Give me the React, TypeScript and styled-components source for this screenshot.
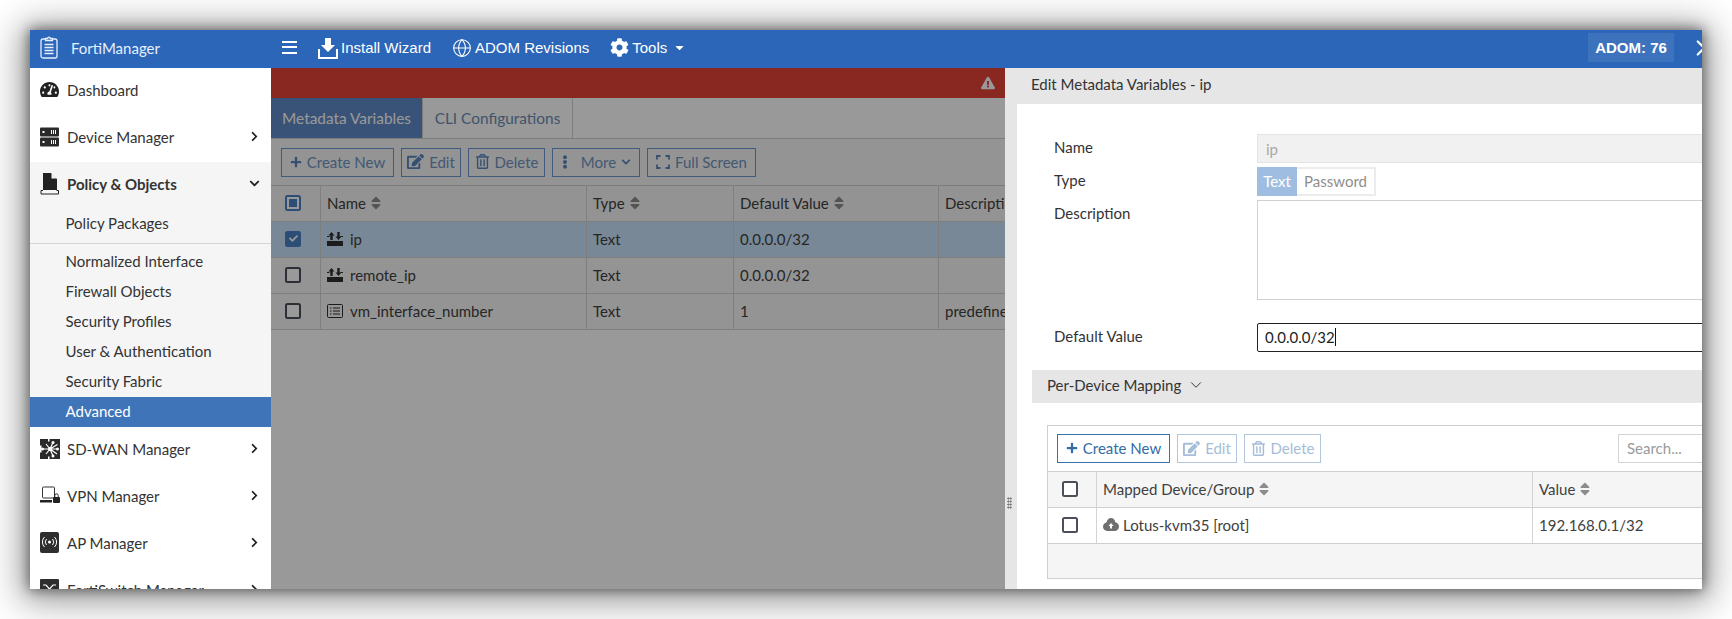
import React from "react";
import styled, { createGlobalStyle } from "styled-components";
import {
  FaCaretDown,
  FaChevronDown,
  FaChevronRight,
  FaCog,
  FaEdit,
  FaEllipsisV,
  FaExclamationTriangle,
  FaPlus,
  FaRegTrashAlt,
  FaSort,
  FaTachometerAlt,
  FaCheck,
} from "react-icons/fa";
import { Globe, ChevronDown, ChevronRight } from "lucide-react";

const Global = createGlobalStyle`
  html, body { margin: 0; padding: 0; background: #fff; }
  body { font-family: "Lato", "Liberation Sans", sans-serif; color: #333; }
`;

const Page = styled.div`
  padding: 30px;
  width: 1732px;
  height: 619px;
  box-sizing: border-box;
  overflow: hidden;
`;

const Win = styled.div`
  width: 1672px;
  height: 559px;
  display: flex;
  flex-direction: column;
  overflow: hidden;
  background: #fff;
  box-shadow: 0 0 12px 1px rgba(0, 0, 0, 0.5), 0 4px 34px 8px rgba(0, 0, 0, 0.4);
`;

/* ---------- top bar ---------- */
const TopBar = styled.header`
  flex: none;
  height: 38px;
  padding-bottom: 3px;
  box-sizing: border-box;
  background: #2c66b8;
  color: #fff;
  display: flex;
  align-items: center;
  font-family: "Liberation Sans", sans-serif;
`;
const Brand = styled.div`
  width: 241px;
  padding-left: 10px;
  box-sizing: border-box;
  display: flex;
  align-items: center;
  gap: 13px;
  font-family: "Lato", sans-serif;
  font-size: 15px;
  color: #e4f0ff;
`;
const Burger = styled.div`
  width: 15px;
  height: 13px;
  margin: 0 21px 0 11px;
  border-top: 2.5px solid #fff;
  border-bottom: 2.5px solid #fff;
  box-sizing: border-box;
  position: relative;
  &::after {
    content: "";
    position: absolute;
    left: 0;
    right: 0;
    top: 2.7px;
    height: 2.5px;
    background: #fff;
  }
`;
const NavItem = styled.div<{ $gap?: number }>`
  display: flex;
  align-items: center;
  gap: 3px;
  font-size: 15px;
  margin-right: ${(p) => p.$gap ?? 21}px;
`;
const Adom = styled.div`
  margin-left: auto;
  height: 29px;
  width: 86px;
  background: #3d72bd;
  display: flex;
  align-items: center;
  justify-content: center;
  font-weight: 700;
  font-size: 15px;
`;
const Next = styled.div`
  width: 28px;
  display: flex;
  justify-content: flex-end;
  svg {
    margin-right: -12px;
  }
`;

/* ---------- sidebar ---------- */
const Body = styled.div`
  flex: 1;
  min-height: 0;
  display: flex;
`;
const Sidebar = styled.nav`
  flex: none;
  width: 241px;
  background: #fff;
  overflow: hidden;
`;
const MenuRow = styled.div<{ $open?: boolean }>`
  height: 47px;
  display: flex;
  align-items: center;
  padding: 0 11px 4px 10px;
  box-sizing: border-box;
  font-size: 15px;
  color: #333;
  font-weight: ${(p) => (p.$open ? 700 : 400)};
  background: ${(p) => (p.$open ? "#f5f5f5" : "#fff")};
`;
const MenuIcon = styled.span`
  width: 27px;
  flex: none;
  display: flex;
  align-items: center;
`;
const MenuLabel = styled.span`
  flex: 1;
`;
const SubMenu = styled.div`
  background: #f5f5f5;
`;
const SubRow = styled.div<{ $active?: boolean }>`
  height: 30px;
  line-height: 28px;
  padding-left: 35.5px;
  font-size: 15px;
  color: ${(p) => (p.$active ? "#fff" : "#333")};
  background: ${(p) => (p.$active ? "#3f75b8" : "transparent")};
`;
const SubDivider = styled.div`
  height: 1px;
  background: #d4d4d4;
  margin: 4px 0 3px;
`;

/* ---------- dimmed main area ---------- */
const Backdrop = styled.main`
  flex: none;
  width: 734px;
  position: relative;
  overflow: hidden;
  background: #fff;
  display: flex;
  flex-direction: column;
`;
const Dim = styled.div`
  position: absolute;
  inset: 0;
  background: rgba(0, 0, 0, 0.4);
`;
const Alert = styled.div`
  flex: none;
  height: 30px;
  background: #e54238;
  color: #fff;
  display: flex;
  align-items: center;
  justify-content: flex-end;
  padding-right: 10px;
  box-sizing: border-box;
`;
const Tabs = styled.div`
  flex: none;
  height: 41px;
  display: flex;
  border-bottom: 1px solid #d0d0d0;
  box-sizing: border-box;
  background: #fff;
`;
const Tab = styled.div<{ $active?: boolean }>`
  width: ${(p) => (p.$active ? 152 : 150)}px;
  display: flex;
  align-items: center;
  justify-content: center;
  font-size: 15.4px;
  color: ${(p) => (p.$active ? "#fff" : "#6d8db5")};
  background: ${(p) => (p.$active ? "#5f89c8" : "#fff")};
  border-right: 1px solid #d0d0d0;
  box-sizing: border-box;
`;
const Toolbar = styled.div`
  flex: none;
  height: 47px;
  display: flex;
  align-items: center;
  gap: 7px;
  padding: 0 10px;
  box-sizing: border-box;
  background: #f7f7f7;
  border-bottom: 1px solid #d0d0d0;
`;
const Btn = styled.div<{ $w: number; $off?: boolean }>`
  width: ${(p) => p.$w}px;
  height: 29px;
  box-sizing: border-box;
  flex: none;
  display: flex;
  align-items: center;
  justify-content: center;
  gap: 5px;
  padding-bottom: 1px;
  font-size: 15px;
  color: ${(p) => (p.$off ? "#a6bdd8" : "#336ba6")};
  border: 1px solid ${(p) => (p.$off ? "#b3c6dc" : "#3a72aa")};
  background: #fff;
`;
const DimBtn = styled(Btn)`
  color: #6f93c0;
  background: #f7f7f7;
  border-color: #6b98d0;
  svg {
    color: #5a86bd;
  }
`;
const VarRow = styled.div<{ $head?: boolean; $selected?: boolean }>`
  display: grid;
  grid-template-columns: 50px 266px 147px 205px 1fr;
  height: 36px;
  box-sizing: border-box;
  border-bottom: 1px solid #d4d4d4;
  background: ${(p) => (p.$selected ? "#c9e3fb" : p.$head ? "#f5f5f5" : "#f7f7f7")};
  font-size: 15px;
  color: #404040;
`;
const Cell = styled.div<{ $center?: boolean }>`
  display: flex;
  align-items: center;
  justify-content: ${(p) => (p.$center ? "center" : "flex-start")};
  gap: 4px;
  padding-left: ${(p) => (p.$center ? 0 : 6)}px;
  padding-right: ${(p) => (p.$center ? 5 : 0)}px;
  padding-bottom: 2px;
  border-right: 1px solid #d4d4d4;
  white-space: nowrap;
  min-width: 0;
  &:last-child {
    border-right: 0;
  }
`;
const NameText = styled.span`
  margin-left: 3px;
`;
const Sort = styled(FaSort)`
  color: #8c8c8c;
  font-size: 16px;
  margin-left: -2px;
`;
const Box = styled.span<{ $on?: boolean }>`
  width: 16px;
  height: 16px;
  box-sizing: border-box;
  border: 2px solid ${(p) => (p.$on ? "#4a80c4" : "#4a4f59")};
  border-radius: 2.5px;
  background: ${(p) => (p.$on ? "#4a80c4" : "#fff")};
  color: #fff;
  display: inline-flex;
  align-items: center;
  justify-content: center;
  font-size: 9px;
`;
const Partial = styled(Box)`
  border-color: #4a80c4;
  background: #fff;
  &::after {
    content: "";
    width: 8px;
    height: 8px;
    background: #4a80c4;
  }
`;

/* ---------- slide-in panel ---------- */
const Panel = styled.aside`
  flex: none;
  width: 900px;
  background: #e6e6e6;
  display: flex;
  flex-direction: column;
  position: relative;
`;
const Handle = styled.div`
  position: absolute;
  left: 2px;
  top: 429px;
  width: 5px;
  height: 12px;
  background-image: radial-gradient(#666 0.8px, transparent 0.9px);
  background-size: 2.5px 3px;
`;
const PanelTitle = styled.div`
  height: 36px;
  flex: none;
  line-height: 33px;
  padding-left: 26px;
  font-size: 15px;
  color: #333;
`;
const PanelBody = styled.div`
  flex: 1;
  margin-left: 12px;
  background: #fff;
  padding-top: 30px;
`;
const FormRow = styled.div<{ $mb?: number }>`
  display: grid;
  grid-template-columns: 203px 1fr;
  padding-left: 37px;
  margin-bottom: ${(p) => p.$mb ?? 4}px;
`;
const Label = styled.div`
  line-height: 27px;
  font-size: 15px;
  color: #333;
`;
const TextField = styled.div<{ $disabled?: boolean; $focus?: boolean }>`
  height: 29px;
  box-sizing: border-box;
  display: flex;
  align-items: center;
  padding-left: ${(p) => (p.$focus ? 7 : 8)}px;
  padding-bottom: ${(p) => (p.$focus ? 1 : 0)}px;
  font-size: 15px;
  color: ${(p) => (p.$disabled ? "#a8a8a8" : "#222")};
  background: ${(p) => (p.$disabled ? "#f1f1f1" : "#fff")};
  border: ${(p) => (p.$focus ? "1px solid #222" : "1px solid #e4e4e4")};
  border-radius: ${(p) => (p.$focus ? "2px" : "0")};
`;
const Caret = styled.span`
  width: 1px;
  height: 18px;
  background: #111;
`;
const TextArea = styled.div`
  height: 100px;
  box-sizing: border-box;
  border: 1px solid #d0d0d0;
  background: #fff;
`;
const Toggle = styled.div`
  display: flex;
  height: 29px;
  width: 119px;
  box-sizing: border-box;
`;
const ToggleOpt = styled.div<{ $on?: boolean }>`
  display: flex;
  align-items: center;
  justify-content: center;
  padding-bottom: 2px;
  font-size: 15px;
  flex: ${(p) => (p.$on ? "0 0 40px" : "1")};
  background: ${(p) => (p.$on ? "#9fbde0" : "#fff")};
  color: ${(p) => (p.$on ? "#fff" : "#8e8e8e")};
  border: ${(p) => (p.$on ? "0" : "2px solid #ececec")};
  border-left: 0;
  box-sizing: border-box;
`;
const SectionBand = styled.div`
  margin: 18px 0 22px 15px;
  height: 33px;
  padding: 0 0 3px 15px;
  box-sizing: border-box;
  background: #e6e6e6;
  display: flex;
  align-items: center;
  gap: 6px;
  font-size: 15px;
  color: #333;
`;
const MapBox = styled.div`
  margin-left: 30px;
  width: 763px;
  box-sizing: border-box;
  border: 1px solid #cfcfcf;
  background: #fff;
`;
const MapToolbar = styled.div`
  height: 46px;
  display: flex;
  align-items: center;
  gap: 7px;
  padding-left: 9px;
  box-sizing: border-box;
  border-bottom: 1px solid #cfcfcf;
`;
const Search = styled.div`
  margin-left: auto;
  margin-right: 11px;
  width: 180px;
  height: 29px;
  box-sizing: border-box;
  border: 1px solid #d4d4d4;
  padding-left: 8px;
  line-height: 26px;
  font-size: 15px;
  color: #9a9a9a;
`;
const MapRow = styled.div<{ $head?: boolean }>`
  display: grid;
  grid-template-columns: 49px 436px 1fr;
  height: 36px;
  box-sizing: border-box;
  border-bottom: 1px solid #cfcfcf;
  background: ${(p) => (p.$head ? "#f5f5f5" : "#fff")};
  font-size: 15px;
  color: #404040;
`;
const MapFoot = styled.div`
  height: 34px;
  background: #f5f5f5;
`;

/* ---------- drawn icons ---------- */
const Clipboard = () => (
  <svg width="18" height="23" viewBox="0 0 18 23" fill="none" stroke="#e4f0ff" strokeWidth="1.3">
    <rect x="1" y="3" width="16" height="19" rx="2" />
    <path d="M5.500 4.500V2.500h2.200a1.300 1.300 0 0 1 2.600 0h2.200v2z" fill="#2c66b8" />
    <path d="M4.500 8.500h9M4.500 11.500h9M4.500 14.500h9M4.500 17.500h9" />
  </svg>
);
const Servers = () => (
  <svg width="19" height="20" viewBox="0 0 19 20">
    <rect y="0.500" width="19" height="9" rx="1" fill="#2a2a2a" />
    <rect y="10.500" width="19" height="9" rx="1" fill="#2a2a2a" />
    <g fill="#fff">
      <rect x="2.500" y="4" width="2" height="2" />
      <rect x="2.500" y="14" width="2" height="2" />
      <path d="M11 3h1v4h-1zM13 3h1v4h-1zM15 3h1v4h-1zM11 13h1v4h-1zM13 13h1v4h-1zM15 13h1v4h-1z" />
    </g>
  </svg>
);
const PolicyIcon = () => (
  <svg width="20" height="22" viewBox="0 0 20 22">
    <path d="M3 0h8l6 6v11H3z" fill="#222" />
    <path d="M11.500 0v5.500H17z" fill="#f5f5f5" />
    <path d="M3 17.500H1v3.500h17.500v-3.500h-2" fill="none" stroke="#222" strokeWidth="1" />
  </svg>
);
const SdWan = () => (
  <svg width="20" height="20" viewBox="0 0 20 20">
    <rect width="20" height="20" fill="#2a2a2a" />
    <path d="M10 10L13 3.500M10 10L17.500 5.500M10 10H18M10 10L17 15M10 10L13 17M10 10H2.500M10 10L6 5M10 10L6 15" stroke="#fff" strokeWidth="1.200" />
    <g fill="#fff">
      <circle cx="10" cy="10" r="2" />
      <circle cx="13" cy="3.500" r="1.500" />
      <circle cx="17.500" cy="10" r="1.500" />
      <circle cx="13" cy="17" r="1.500" />
      <circle cx="2.500" cy="10" r="1.500" />
    </g>
    <path d="M0 6.500h1.500v7H0zM8 0h1.500v2.500H8zM8 17.500h1.500V20H8z" fill="#fff" />
  </svg>
);
const VpnIcon = () => (
  <svg width="20" height="20" viewBox="0 0 20 20">
    <rect x="2.500" y="1" width="12" height="11" rx="1" fill="none" stroke="#333" strokeWidth="1" />
    <path d="M0 14h12v2.500H0z" fill="#222" />
    <rect x="13" y="11" width="7" height="6" rx="1" fill="#222" />
    <path d="M14.800 11V9.500a1.700 1.700 0 0 1 3.400 0V11" fill="none" stroke="#222" strokeWidth="1" />
  </svg>
);
const ApIcon = () => (
  <svg width="19" height="21" viewBox="0 0 19 21">
    <rect width="19" height="21" rx="2" fill="#2e2e2e" />
    <circle cx="9.500" cy="10" r="1.500" fill="#fff" />
    <path d="M6.500 7a4.500 4.500 0 0 0 0 6M12.500 7a4.500 4.500 0 0 1 0 6M4.500 5a7 7 0 0 0 0 10M14.500 5a7 7 0 0 1 0 10" stroke="#fff" strokeWidth="1" fill="none" />
  </svg>
);
const SwitchIcon = () => (
  <svg width="19" height="21" viewBox="0 0 19 21">
    <rect width="19" height="21" rx="1" fill="#2e2e2e" />
    <path d="M3 6h3l7 8h3M3 14h3l7-8h3" stroke="#fff" strokeWidth="1.200" fill="none" />
  </svg>
);
const InstallIcon = () => (
  <svg width="20" height="22" viewBox="0 0 20 22" fill="#fff">
    <path d="M7 1h6v7h4l-7 7-7-7h4z" />
    <path d="M0 12h2v8h16v-8h2v10H0z" />
  </svg>
);
const Corners = () => (
  <svg width="14" height="14" viewBox="0 0 14 14" fill="none" stroke="currentColor" strokeWidth="1.800">
    <path d="M1 4.500V1h3.500M9.500 1H13v3.500M13 9.500V13H9.500M4.500 13H1V9.500" />
  </svg>
);
const MetaIcon = () => (
  <svg width="16" height="14" viewBox="0 0 16 14" fill="#2f2f2f">
    <rect y="9" width="16" height="5" />
    <path d="M4.500 0l3 3.500H5.700V8H3.300V3.500H1.500zM11.500 8l-3-3.500h1.800V0h2.400v4.500h1.800z" />
    <path d="M0 4h2.500v1H0zM13.500 4H16v1h-2.500z" />
  </svg>
);
const ListIcon = () => (
  <svg width="16" height="14" viewBox="0 0 16 14" fill="none" stroke="#2f2f2f">
    <rect x=".5" y=".5" width="15" height="13" rx="1" />
    <path d="M3 4h1.500M6 4h7M3 7h1.500M6 7h7M3 10h1.500M6 10h7" />
  </svg>
);
const CloudIcon = () => (
  <svg width="16" height="13" viewBox="0 0 16 13" fill="#6f6f6f">
    <path d="M8 0c2.400 0 4 1.700 4.300 4.200C14.500 4.500 16 6.300 16 8.500 16 11 14 13 11.600 13H4.200C1.900 13 0 11.100 0 8.800c0-2 1.400-3.800 3.400-4.200C4 2 5.800 0 8 0z" />
    <path d="M8 5l2.500 3H9v2.500H7V8H5.500z" fill="#fff" />
  </svg>
);

const side: [string, React.ReactNode][] = [
  ["SD-WAN Manager", <SdWan />],
  ["VPN Manager", <VpnIcon />],
  ["AP Manager", <ApIcon />],
  ["FortiSwitch Manager", <SwitchIcon />],
];
const subs = ["Normalized Interface", "Firewall Objects", "Security Profiles", "User & Authentication", "Security Fabric"];

const More = <FaChevronRight size={11} color="#222" />;

export default function App() {
  return (
    <Page>
      <Global />
      <Win>
        <TopBar>
          <Brand>
            <Clipboard />
            FortiManager
          </Brand>
          <Burger />
          <NavItem>
            <InstallIcon />
            Install Wizard
          </NavItem>
          <NavItem>
            <Globe size={20} strokeWidth={1.3} />
            ADOM Revisions
          </NavItem>
          <NavItem>
            <FaCog size={19} />
            Tools
            <FaCaretDown size={13} style={{ marginLeft: 3 }} />
          </NavItem>
          <Adom>ADOM: 76</Adom>
          <Next>
            <ChevronRight size={26} strokeWidth={2} />
          </Next>
        </TopBar>
        <Body>
          <Sidebar>
            <MenuRow>
              <MenuIcon>
                <FaTachometerAlt size={19} color="#222" />
              </MenuIcon>
              <MenuLabel>Dashboard</MenuLabel>
            </MenuRow>
            <MenuRow>
              <MenuIcon>
                <Servers />
              </MenuIcon>
              <MenuLabel>Device Manager</MenuLabel>
              {More}
            </MenuRow>
            <MenuRow $open>
              <MenuIcon>
                <PolicyIcon />
              </MenuIcon>
              <MenuLabel>Policy &amp; Objects</MenuLabel>
              <FaChevronDown size={11} color="#222" />
            </MenuRow>
            <SubMenu>
              <SubRow>Policy Packages</SubRow>
              <SubDivider />
              {subs.map((s) => (
                <SubRow key={s}>{s}</SubRow>
              ))}
              <SubRow $active>Advanced</SubRow>
            </SubMenu>
            {side.map(([label, icon]) => (
              <MenuRow key={label}>
                <MenuIcon>{icon}</MenuIcon>
                <MenuLabel>{label}</MenuLabel>
                {More}
              </MenuRow>
            ))}
          </Sidebar>

          <Backdrop>
            <Alert>
              <FaExclamationTriangle size={14} />
            </Alert>
            <Tabs>
              <Tab $active>Metadata Variables</Tab>
              <Tab>CLI Configurations</Tab>
            </Tabs>
            <Toolbar>
              <DimBtn $w={113}>
                <FaPlus size={12} />
                Create New
              </DimBtn>
              <DimBtn $w={60}>
                <FaEdit size={17} />
                Edit
              </DimBtn>
              <DimBtn $w={77}>
                <FaRegTrashAlt size={15} />
                Delete
              </DimBtn>
              <DimBtn $w={88}>
                <FaEllipsisV size={14} style={{ marginRight: 4 }} />
                More
                <FaChevronDown size={10} style={{ marginRight: 3 }} />
              </DimBtn>
              <DimBtn $w={109}>
                <Corners />
                Full Screen
              </DimBtn>
            </Toolbar>
            <VarRow $head>
              <Cell $center>
                <Partial />
              </Cell>
              <Cell>
                Name <Sort />
              </Cell>
              <Cell>
                Type <Sort />
              </Cell>
              <Cell>
                Default Value <Sort />
              </Cell>
              <Cell>Description</Cell>
            </VarRow>
            <VarRow $selected>
              <Cell $center>
                <Box $on>
                  <FaCheck />
                </Box>
              </Cell>
              <Cell>
                <MetaIcon />
                <NameText>ip</NameText>
              </Cell>
              <Cell>Text</Cell>
              <Cell>0.0.0.0/32</Cell>
              <Cell />
            </VarRow>
            <VarRow>
              <Cell $center>
                <Box />
              </Cell>
              <Cell>
                <MetaIcon />
                <NameText>remote_ip</NameText>
              </Cell>
              <Cell>Text</Cell>
              <Cell>0.0.0.0/32</Cell>
              <Cell />
            </VarRow>
            <VarRow>
              <Cell $center>
                <Box />
              </Cell>
              <Cell>
                <ListIcon />
                <NameText>vm_interface_number</NameText>
              </Cell>
              <Cell>Text</Cell>
              <Cell>1</Cell>
              <Cell>predefined</Cell>
            </VarRow>
            <Dim />
          </Backdrop>

          <Panel>
            <Handle />
            <PanelTitle>Edit Metadata Variables - ip</PanelTitle>
            <PanelBody>
              <FormRow>
                <Label>Name</Label>
                <TextField $disabled>ip</TextField>
              </FormRow>
              <FormRow>
                <Label>Type</Label>
                <Toggle>
                  <ToggleOpt $on>Text</ToggleOpt>
                  <ToggleOpt>Password</ToggleOpt>
                </Toggle>
              </FormRow>
              <FormRow $mb={23}>
                <Label>Description</Label>
                <TextArea />
              </FormRow>
              <FormRow $mb={0}>
                <Label>Default Value</Label>
                <TextField $focus>
                  0.0.0.0/32
                  <Caret />
                </TextField>
              </FormRow>
              <SectionBand>
                Per-Device Mapping
                <ChevronDown size={18} strokeWidth={1.3} />
              </SectionBand>
              <MapBox>
                <MapToolbar>
                  <Btn $w={113}>
                    <FaPlus size={12} />
                    Create New
                  </Btn>
                  <Btn $w={60} $off>
                    <FaEdit size={17} />
                    Edit
                  </Btn>
                  <Btn $w={77} $off>
                    <FaRegTrashAlt size={15} />
                    Delete
                  </Btn>
                  <Search>Search...</Search>
                </MapToolbar>
                <MapRow $head>
                  <Cell $center>
                    <Box />
                  </Cell>
                  <Cell>
                    Mapped Device/Group <Sort />
                  </Cell>
                  <Cell>
                    Value <Sort />
                  </Cell>
                </MapRow>
                <MapRow>
                  <Cell $center>
                    <Box />
                  </Cell>
                  <Cell>
                    <CloudIcon />
                    Lotus-kvm35 [root]
                  </Cell>
                  <Cell>192.168.0.1/32</Cell>
                </MapRow>
                <MapFoot />
              </MapBox>
            </PanelBody>
          </Panel>
        </Body>
      </Win>
    </Page>
  );
}
